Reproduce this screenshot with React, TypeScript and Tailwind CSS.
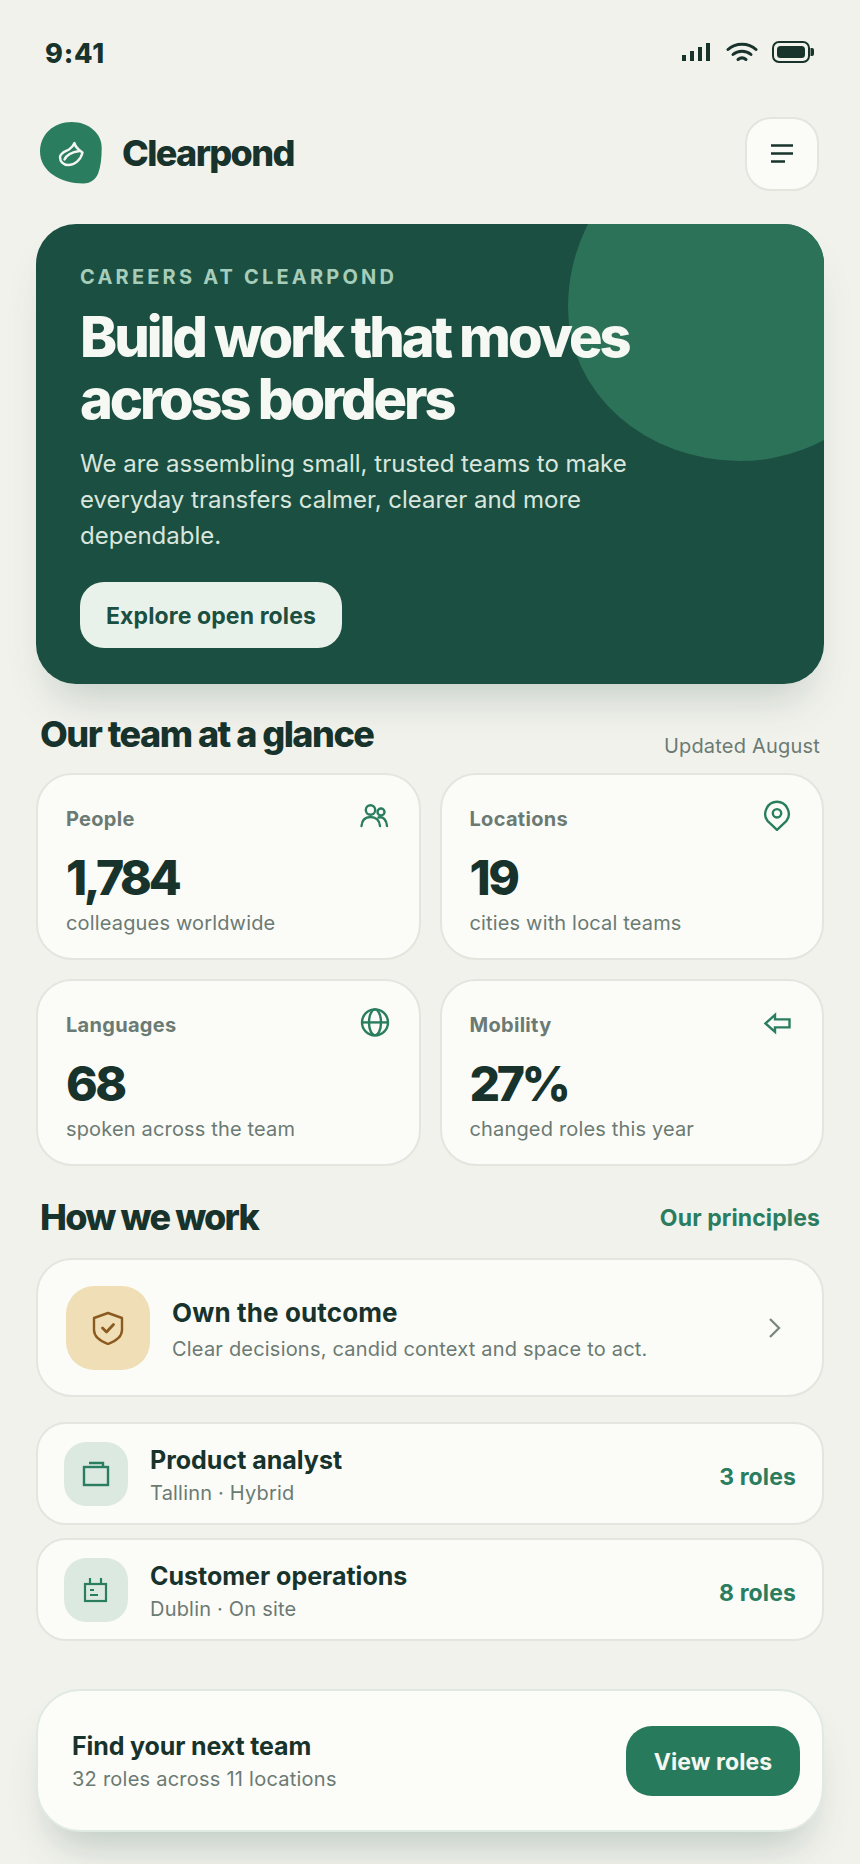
import React from "react";

const Dark = "#17332b";

function StatusIcons() {
  return (
    <div className="flex items-center gap-[14px]">
      <svg className="mr-[2px]" width="28" height="20" viewBox="0 0 28 20" fill={Dark}>
        <rect x="0" y="13" width="4" height="6" />
        <rect x="8" y="9" width="4" height="10" />
        <rect x="16" y="5" width="4" height="14" />
        <rect x="24" y="1" width="4" height="18" />
      </svg>
      <svg width="32" height="22" viewBox="0 0 32 22" fill="none" stroke={Dark} strokeWidth="3" strokeLinecap="round">
        <path d="M2 8.500C9.500 1.500 22.500 1.500 30 8.500" />
        <path d="M7 13.500C12 9 20 9 25 13.500" />
        <path d="M12 18.500C14.400 16.500 17.600 16.500 20 18.500" />
      </svg>
      <svg width="42" height="22" viewBox="0 0 42 22" fill="none">
        <rect x="1" y="1" width="36" height="20" rx="6" stroke={Dark} strokeWidth="2" />
        <rect x="5" y="5" width="28" height="12" rx="3.500" fill={Dark} />
        <path d="M38.500 7h1.500a2 2 0 0 1 2 2v4a2 2 0 0 1-2 2h-1.500z" fill={Dark} />
      </svg>
    </div>
  );
}

function Logo() {
  return (
    <svg width="62" height="62" viewBox="0 0 62 62" fill="none">
      <path
        d="M31.700 0C48.300 0 61.700 11 61.700 26C61.700 36 60.700 44.300 58.300 51C56 57 50.700 61.500 43.300 61.500C20 61.500 0 49.300 0 29.300C0 12.700 13.300 0 31.700 0Z"
        fill="#2a7d5f"
      />
      <g transform="translate(19 19.500)" stroke="#f4f7f1" strokeWidth="2.400" strokeLinejoin="round" strokeLinecap="round">
        <path d="M15.500 1.500C16 6 20 8.500 23.500 11C22 18 16 23.500 9 23.500C4 23.500 1 20 1 15.500C1.500 11 6 10 10 8C12 6.500 14.500 4 15.500 1.500Z" />
        <path d="M5.500 18C7.500 13.500 13 10.500 20.500 9.500" />
      </g>
    </svg>
  );
}

function PeopleIcon() {
  return (
    <svg width="32" height="32" viewBox="0 0 32 32" fill="none" stroke="#2a7d5f" strokeWidth="2.400" strokeLinecap="round">
      <circle cx="11.500" cy="11" r="4.700" />
      <circle cx="22" cy="13" r="3.500" />
      <path d="M2.500 27C3 21 6.500 18 11.500 18C16.500 18 20.500 21 21 27" />
      <path d="M19.500 18.500C24.500 17.500 27.500 21 28 27" />
    </svg>
  );
}

function PinIcon() {
  return (
    <svg width="32" height="32" viewBox="0 0 32 32" fill="none" stroke="#2a7d5f" strokeWidth="2.400" strokeLinejoin="round">
      <g transform="translate(0 0.800)">
        <path d="M15 30L5.500 21C0 14 5 2 15 2C25 2 30 14 24.500 21Z" />
        <circle cx="15" cy="13.500" r="4.200" />
      </g>
    </svg>
  );
}

function GlobeIcon() {
  return (
    <svg width="32" height="32" viewBox="0 0 32 32" fill="none" stroke="#2a7d5f" strokeWidth="2.400">
      <g transform="translate(1 2.400)">
        <circle cx="15" cy="15" r="13" />
        <ellipse cx="15" cy="15" rx="6" ry="13" />
        <path d="M2 15H28" />
      </g>
    </svg>
  );
}

function ArrowIcon() {
  return (
    <svg width="32" height="32" viewBox="0 0 32 32" fill="none" stroke="#2a7d5f" strokeWidth="2.400" strokeLinejoin="miter">
      <g transform="translate(0 2.400)">
        <path d="M3.500 16L13 7.500V12H27.500V20H13V24.500Z" />
      </g>
    </svg>
  );
}

function ShieldIcon() {
  return (
    <svg width="32" height="34" viewBox="0 0 32 34" fill="none" stroke="#8a5a1f" strokeWidth="2.400" strokeLinejoin="round" strokeLinecap="round">
      <path d="M16 2L30 7V19C30 25 24 30 16 33C8 30 2 25 2 19V7Z" />
      <path d="M10.500 17L14.500 21L21.500 13.500" strokeWidth="2.800" />
    </svg>
  );
}

function BriefcaseIcon() {
  return (
    <svg width="28" height="26" viewBox="0 0 28 26" fill="none" stroke="#2a7d5f" strokeWidth="2.400">
      <rect x="2" y="6" width="24" height="18" />
      <path d="M7 2H21V6" />
    </svg>
  );
}

function BadgeIcon() {
  return (
    <svg width="26" height="26" viewBox="0 0 26 26" fill="none" stroke="#2a7d5f" strokeWidth="2.200">
      <rect x="2" y="7" width="21" height="17" />
      <path d="M7 1V7M18 1V7" />
      <path d="M7 13H11M7 18H15" />
    </svg>
  );
}

function Stat({
  label,
  value,
  sub,
  icon,
  tight,
}: {
  label: string;
  value: string;
  sub: string;
  icon: React.ReactNode;
  tight?: boolean;
}) {
  return (
    <div className="flex h-[187px] flex-col rounded-[36px] border-2 border-[#e3e5de] bg-[#fbfcf8] pt-[24px] pl-[28px] pr-[28px]">
      <div className="flex items-end justify-between">
        <span className="text-[20px] leading-[24px] font-bold tracking-[0.015em] text-[#6b7a73]">{label}</span>
        {icon}
      </div>
      <div
        className={
          tight
            ? "mt-[19px] text-[48px] leading-[56px] font-extrabold tracking-[-0.07em] text-[#17332b]"
            : "mt-[19px] text-[48px] leading-[56px] font-extrabold tracking-[-0.05em] text-[#17332b]"
        }
      >
        {value}
      </div>
      <div className="mt-[3px] text-[20px] leading-[28px] tracking-[0.008em] text-[#6b7a73]">{sub}</div>
    </div>
  );
}

function Job({ title, sub, count, icon }: { title: string; sub: string; count: string; icon: React.ReactNode }) {
  return (
    <div className="flex h-[103px] items-center rounded-[30px] border-2 border-[#e3e5de] bg-[#fbfcf8] pl-[26px] pr-[26px]">
      <div className="flex h-[64px] w-[64px] items-center justify-center rounded-[22px] bg-[#dce9e1]">{icon}</div>
      <div className="ml-[22px] flex-1 pt-[3px]">
        <div className="text-[25px] leading-[32px] font-bold text-[#17332b]">{title}</div>
        <div className="mt-[3px] text-[20px] leading-[28px] tracking-[0.01em] text-[#6b7a73]">{sub}</div>
      </div>
      <span className="mt-[8px] text-[23px] font-bold tracking-[0.005em] text-[#2a7d5f]">{count}</span>
    </div>
  );
}

export default function App() {
  return (
    <div className="flex min-h-[1864px] w-[860px] flex-col bg-[#f2f2ec] font-['Inter',sans-serif] px-[36px]">
      <div className="flex h-[108px] items-start justify-between pt-[38px] pl-[9px] pr-[10px]">
        <span className="text-[27px] leading-[32px] font-extrabold tracking-[0.03em] text-[#17332b]">9:41</span>
        <div className="pt-[3px]">
          <StatusIcons />
        </div>
      </div>

      <div className="mt-[9px] flex h-[74px] items-center justify-between pl-[4px] pr-[5px]">
        <div className="mb-[2px] flex items-center gap-[20px]">
          <Logo />
          <span className="text-[36px] leading-[44px] font-extrabold tracking-[-0.045em] text-[#17332b]">Clearpond</span>
        </div>
        <div className="flex h-[74px] w-[74px] items-center justify-center rounded-[26px] border-2 border-[#e3e5de] bg-[#fbfcf8]">
          <svg width="24" height="22" viewBox="0 0 24 22" fill="none" stroke="#17332b" strokeWidth="2.400">
            <path d="M1 2.500H23M1 10.500H23M1 18.500H15" />
          </svg>
        </div>
      </div>

      <div className="relative mt-[33px] h-[460px] w-[788px] overflow-hidden rounded-[40px] bg-[#1b4f41] pl-[44px] pt-[39px] shadow-[0_28px_44px_-16px_rgba(27,79,65,0.22)]">
        <div className="absolute left-[532px] top-[-117px] h-[354px] w-[340px] rounded-[222px_50px_168px_172px/200px_50px_157px_153px] bg-[#2c7258]" />
        <div className="relative">
          <div className="text-[20px] leading-[28px] font-bold tracking-[0.16em] text-[#a6cdb9]">CAREERS AT CLEARPOND</div>
          <h1 className="mt-[15px] text-[56px] leading-[62px] font-extrabold tracking-[-0.055em] text-[#f6f8f3]">
            Build work that moves
            <br />
            across borders
          </h1>
          <p className="mt-[16px] text-[24px] leading-[36px] text-[#d8e6dd]">
            We are assembling small, trusted teams to make
            <br />
            everyday transfers calmer, clearer and more
            <br />
            dependable.
          </p>
          <div className="mt-[28px] flex h-[66px] w-[262px] items-center justify-center rounded-[24px] bg-[#e9f2ea] pt-[2px] text-[23px] font-bold tracking-[0.005em] text-[#1b4f41]">
            Explore open roles
          </div>
        </div>
      </div>

      <div className="mt-[28px] flex items-end justify-between pl-[4px] pr-[4px]">
        <h2 className="text-[36px] leading-[44px] font-extrabold tracking-[-0.042em] text-[#17332b]">Our team at a glance</h2>
        <span className="mb-[-4px] text-[20px] leading-[28px] tracking-[0.01em] text-[#6b7a73]">Updated August</span>
      </div>

      <div className="mt-[17px] grid grid-cols-2 gap-x-[19px] gap-y-[19px]">
        <Stat label="People" value="1,784" sub="colleagues worldwide" icon={<PeopleIcon />} tight />
        <Stat label="Locations" value="19" sub="cities with local teams" icon={<PinIcon />} />
        <Stat label="Languages" value="68" sub="spoken across the team" icon={<GlobeIcon />} />
        <Stat label="Mobility" value="27%" sub="changed roles this year" icon={<ArrowIcon />} tight />
      </div>

      <div className="mt-[29px] flex items-center justify-between pl-[4px] pr-[4px]">
        <h2 className="text-[36px] leading-[44px] font-extrabold tracking-[-0.05em] text-[#17332b]">How we work</h2>
        <span className="mt-[2px] text-[23px] leading-[32px] font-bold tracking-[0.005em] text-[#2a7d5f]">Our principles</span>
      </div>

      <div className="mt-[19px] flex h-[139px] items-center rounded-[36px] border-2 border-[#e3e5de] bg-[#fbfcf8] pl-[28px] pr-[40px]">
        <div className="flex h-[84px] w-[84px] items-center justify-center rounded-[28px] bg-[#f0dfb6]">
          <ShieldIcon />
        </div>
        <div className="ml-[22px] flex-1 pt-[3px]">
          <div className="text-[26px] leading-[34px] font-bold tracking-[0.005em] text-[#17332b]">Own the outcome</div>
          <div className="mt-[5px] text-[20px] leading-[28px] tracking-[0.01em] text-[#6b7a73]">Clear decisions, candid context and space to act.</div>
        </div>
        <svg width="14" height="22" viewBox="0 0 14 22" fill="none" stroke="#7c8983" strokeWidth="2.400">
          <path d="M2 2L11 11L2 20" />
        </svg>
      </div>

      <div className="mt-[25px] flex flex-col gap-[13px]">
        <Job title="Product analyst" sub="Tallinn · Hybrid" count="3 roles" icon={<BriefcaseIcon />} />
        <Job title="Customer operations" sub="Dublin · On site" count="8 roles" icon={<BadgeIcon />} />
      </div>

      <div className="mt-[48px] flex h-[143px] items-center justify-between rounded-[44px] border-2 border-[#e1e9e3] bg-[#fcfcf8] pl-[34px] pr-[22px] shadow-[0_28px_40px_-16px_rgba(27,79,65,0.25)]">
        <div className="pt-[2px]">
          <div className="text-[25px] leading-[32px] font-bold tracking-[-0.005em] text-[#17332b]">Find your next team</div>
          <div className="mt-[3px] text-[20px] leading-[28px] tracking-[0.012em] text-[#6b7a73]">32 roles across 11 locations</div>
        </div>
        <div className="flex h-[70px] w-[174px] items-center justify-center rounded-[26px] bg-[#287a5d] pt-[3px] text-[23px] font-bold tracking-[0.005em] text-[#f4f7f1]">
          View roles
        </div>
      </div>
    </div>
  );
}
